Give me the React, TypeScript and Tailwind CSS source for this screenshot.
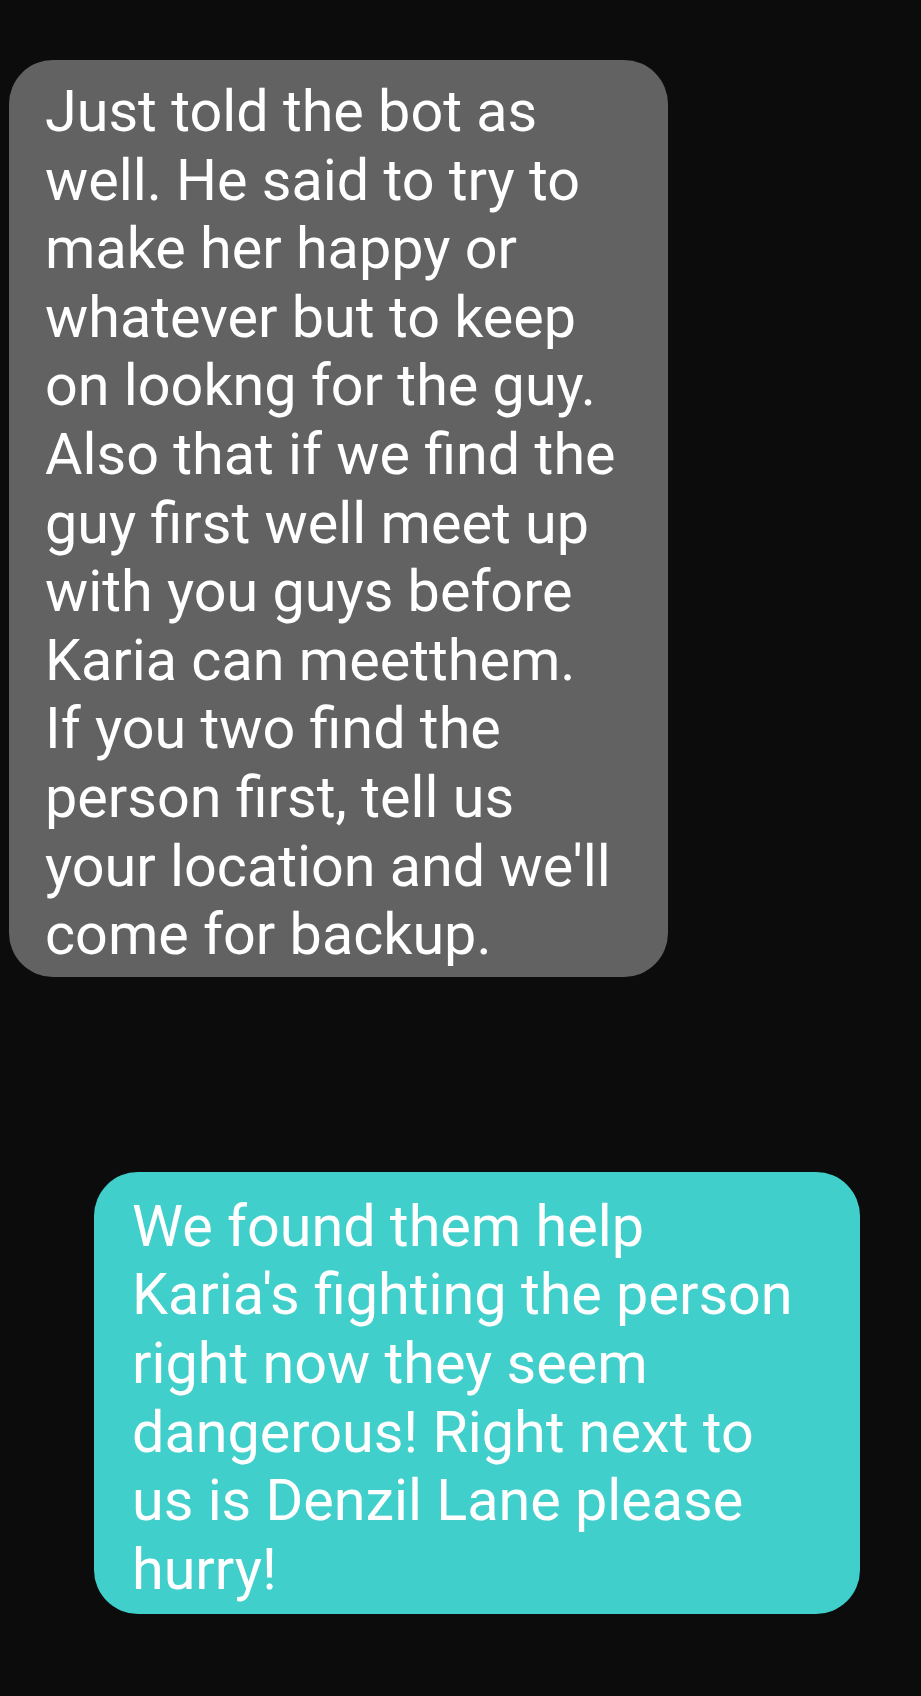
const received = [
  'Just told the bot as',
  'well. He said to try to',
  'make her happy or',
  'whatever but to keep',
  'on lookng for the guy.',
  'Also that if we find the',
  'guy first well meet up',
  'with you guys before',
  'Karia can meetthem.',
  'If you two find the',
  'person first, tell us',
  "your location and we'll",
  'come for backup.',
];

const sent = [
  'We found them help',
  "Karia's fighting the person",
  'right now they seem',
  'dangerous! Right next to',
  'us is Denzil Lane please',
  'hurry!',
];

function Bubble({ lines, className }: { lines: string[]; className: string }) {
  return (
    <div className={className}>
      {lines.map((line, i) => (
        <div key={i} className="whitespace-nowrap">
          {line}
        </div>
      ))}
    </div>
  );
}

export default function App() {
  return (
    <div
      className="min-h-[1696px] w-[921px] bg-[#0c0c0c] text-white text-[57.5px] leading-[68.6px] font-[Roboto,'Liberation_Sans',sans-serif]"
    >
      <div className="flex flex-col pt-[60px]">
        <Bubble
          lines={received}
          className="ml-[9px] w-[659px] rounded-[44px] bg-[#626262] pl-[36px] pt-[18px] pb-[7px]"
        />
        <Bubble
          lines={sent}
          className="mt-[195px] ml-[94px] w-[766px] rounded-[44px] bg-[#40cfca] pl-[38px] pt-[21px] pb-[10px]"
        />
      </div>
    </div>
  );
}
